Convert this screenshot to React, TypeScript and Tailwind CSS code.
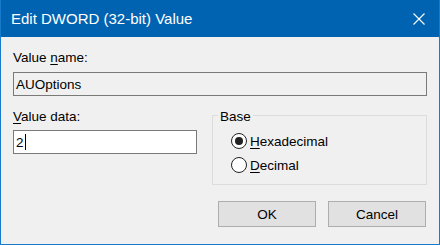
export default function App() {
  return (
    <div className="w-[440px] h-[245px] flex flex-col bg-[#F0F0F0] border-x border-b border-[#1979CA] text-black font-['Liberation_Sans',Arial,sans-serif] overflow-hidden">
      <div className="h-[37px] shrink-0 flex items-center justify-between bg-[#0063B1] pl-[10px] pr-[14px]">
        <span className="text-[15px] leading-[18px] text-white">Edit DWORD (32-bit) Value</span>
        <svg width="12" height="12" viewBox="0 0 12 12" className="block">
          <path d="M0.5 0.5 L11.5 11.5 M11.5 0.5 L0.5 11.5" stroke="white" strokeWidth="1.1" fill="none" />
        </svg>
      </div>
      <div className="flex-1 flex flex-col pl-[12px] pr-[12px] pt-[13px] text-[13.5px] leading-[15px]">
        <div className="h-[15px]">
          Value <span className="underline underline-offset-[2px]">n</span>ame:
        </div>
        <div className="mt-[7px] h-[24px] w-[414px] border border-[#7A7A7A] bg-[#F0F0F0] flex items-center pl-[2px]">
          AUOptions
        </div>
        <div className="mt-[13px] flex">
          <div className="w-[184px] flex flex-col">
            <div className="h-[15px]">
              <span className="underline underline-offset-[2px]">V</span>alue data:
            </div>
            <div className="mt-[6px] h-[24px] border border-[#7A7A7A] bg-white flex items-center pl-[2px]">
              <span>2</span>
              <span className="ml-[1px] w-[1px] h-[16px] bg-black" />
            </div>
          </div>
          <div className="ml-[15px] mt-[6px] w-[215px] h-[70px] border border-[#DCDCDC] relative">
            <span className="absolute -top-[7px] left-[5px] px-[2px] bg-[#F0F0F0] leading-[15px]">Base</span>
            <div className="flex flex-col gap-[8px] pt-[17px] pl-[18px]">
              <div className="flex items-center h-[16px]">
                <span className="w-[16px] h-[16px] rounded-full border border-[#222222] bg-white flex items-center justify-center">
                  <span className="w-[8px] h-[8px] rounded-full bg-[#222222]" />
                </span>
                <span className="ml-[3px]">
                  <span className="underline underline-offset-[2px]">H</span>exadecimal
                </span>
              </div>
              <div className="flex items-center h-[16px]">
                <span className="w-[16px] h-[16px] rounded-full border border-[#222222] bg-white" />
                <span className="ml-[3px]">
                  <span className="underline underline-offset-[2px]">D</span>ecimal
                </span>
              </div>
            </div>
          </div>
        </div>
        <div className="mt-[16px] flex justify-end gap-[12px] pr-[1px]">
          <div className="w-[98px] h-[26px] border border-[#ADADAD] bg-[#E1E1E1] flex items-center justify-center">OK</div>
          <div className="w-[98px] h-[26px] border border-[#ADADAD] bg-[#E1E1E1] flex items-center justify-center">Cancel</div>
        </div>
      </div>
    </div>
  );
}
